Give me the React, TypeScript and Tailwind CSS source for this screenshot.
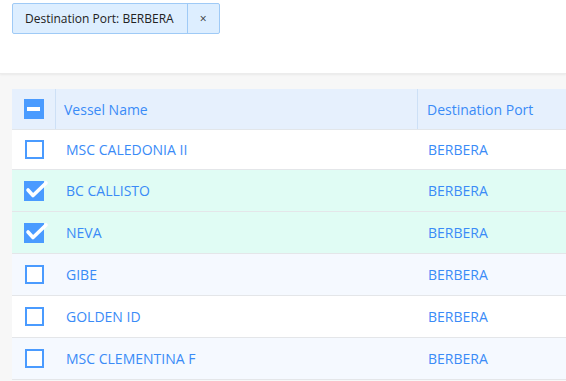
import React from "react";

const ROWS = [
  { name: "MSC CALEDONIA II", port: "BERBERA", checked: false, bg: "bg-white", h: "h-[40px]" },
  { name: "BC CALLISTO", port: "BERBERA", checked: true, bg: "bg-[#e0fcf4]", h: "h-[42px]" },
  { name: "NEVA", port: "BERBERA", checked: true, bg: "bg-[#e0fcf4]", h: "h-[42px]" },
  { name: "GIBE", port: "BERBERA", checked: false, bg: "bg-[#f5f9ff]", h: "h-[42px]" },
  { name: "GOLDEN ID", port: "BERBERA", checked: false, bg: "bg-white", h: "h-[42px]" },
  { name: "MSC CLEMENTINA F", port: "BERBERA", checked: false, bg: "bg-[#f5f9ff]", h: "h-[42px]" },
];

function Checkbox({ checked }: { checked: boolean }) {
  if (!checked) {
    return <div className="w-[19px] h-[19px] border-2 border-[#4a9bff] bg-white" />;
  }
  return (
    <div className="relative w-[20px] h-[20px] bg-[#4a9bff]">
      <svg
        width="26"
        height="22"
        viewBox="0 0 26 22"
        className="absolute left-0 top-0 overflow-visible"
      >
        <path d="M4 9 L9 14.5 L22 2" fill="none" stroke="white" strokeWidth="3.6" strokeLinecap="round" strokeLinejoin="round" />
      </svg>
    </div>
  );
}

export default function App() {
  return (
    <div className="w-[566px] h-[381px] overflow-hidden bg-[#f7f7f7] flex flex-col" style={{ fontFamily: '"Open Sans", sans-serif' }}>
      <div className="h-[74px] shrink-0 bg-white shadow-[0_1px_2px_rgba(0,0,0,0.06)] border-b border-[#ececec] pt-[3px] pl-[12px] relative z-10">
        <div className="inline-flex h-[31px] bg-[#ddeeff] border border-[#9fcaf6] rounded-[2px] text-[12px] text-[#222]">
          <span className="flex items-center pl-[12px] pr-[13px]">Destination Port: BERBERA</span>
          <button className="flex items-center justify-center w-[32px] border-l border-[#9fcaf6] text-[12px] text-[#333]">×</button>
        </div>
      </div>
      <div className="pt-[15px] pl-[12px]">
        <div className="w-[620px] text-[14px] text-[#3a8bf7]">
          <div className="flex h-[41px] bg-[#e6f0fd] border-b border-[#e2e6ea]">
            <div className="w-[44px] flex items-center justify-center border-r border-[#cde0f6]">
              <div className="w-[20px] h-[20px] bg-[#4a9bff] flex items-center justify-center">
                <div className="w-[13px] h-[4px] bg-white" />
              </div>
            </div>
            <div className="w-[362px] flex items-center pl-[8px] border-r border-[#cde0f6]">Vessel Name</div>
            <div className="flex-1 flex items-center pl-[9px]">Destination Port</div>
          </div>
          {ROWS.map((r) => (
            <div key={r.name} className={`flex ${r.h} ${r.bg} border-b border-[#e4e6e9]`}>
              <div className="w-[44px] flex items-center justify-center">
                <Checkbox checked={r.checked} />
              </div>
              <div className="w-[362px] flex items-center pl-[10px]">{r.name}</div>
              <div className="flex-1 flex items-center pl-[10px]">{r.port}</div>
            </div>
          ))}
        </div>
      </div>
    </div>
  );
}
